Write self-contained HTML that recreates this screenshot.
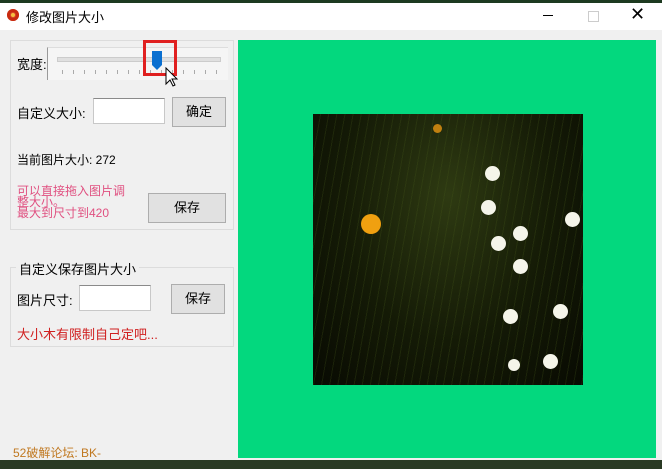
<!DOCTYPE html><html><head><meta charset="utf-8"><style>
body{margin:0;width:662px;height:469px;overflow:hidden;background:#1d3a20;font-family:"Liberation Sans","Noto Sans CJK SC",sans-serif;font-size:12px;position:relative}
.a{position:absolute}
.win{left:0;top:3px;width:662px;height:457px;background:#f0f0f0}
.title{left:0;top:3px;width:662px;height:27px;background:#fff}
.btn{background:#e1e1e1;border:1px solid #adadad;box-sizing:border-box;text-align:center;font-size:13px}
.inp{background:#fff;border:1px solid #c8c8c8;border-top-color:#8a8a8a;box-sizing:border-box}
.grp{border:1px solid #dcdcdc;box-sizing:border-box}
.f{position:absolute;border-radius:50%;background:#f5f5ea;width:15px;height:15px}
</style></head><body>
<div class="a win"></div>
<div class="a title"></div>
<div class="a" style="left:7px;top:9px;width:12px;height:12px;border-radius:50%;background:#d94a2a;box-shadow:inset 0 0 0 3px #c82a10"></div>
<div class="a" style="left:11px;top:13px;width:4px;height:4px;border-radius:50%;background:#f5c040"></div>
<div class="a" style="left:26px;top:7px;font-size:13px;color:#000">修改图片大小</div>
<div class="a" style="left:543px;top:15px;width:10px;height:1px;background:#000"></div>
<div class="a" style="left:588px;top:11px;width:9px;height:9px;border:1px solid #ccc"></div>
<div class="a" style="left:630px;top:4px;font-size:18px;color:#000">✕</div>
<div class="a" style="left:0;top:460px;width:662px;height:9px;background:#2a3a24"></div>
<div class="a grp" style="left:10px;top:40px;width:224px;height:190px"></div>
<div class="a" style="left:17px;top:54px;font-size:13px">宽度:</div>
<div class="a" style="left:47px;top:47px;width:180px;height:32px;background:#f5f5f5;border-left:1px solid #999;border-top:1px solid #ddd"></div>
<div class="a" style="left:57px;top:57px;width:162px;height:3px;background:#e0e0e0;border:1px solid #ccc"></div>
<div class="a" style="left:62px;top:70px;width:160px;height:4px;background:repeating-linear-gradient(90deg,#aaa 0 1px,transparent 1px 11px)"></div>
<div class="a" style="left:143px;top:40px;width:28px;height:30px;border:3px solid #e02020"></div>
<svg class="a" style="left:150px;top:50px" width="16" height="22"><path d="M2 1h10v14l-5 5-5-5z" fill="#0a6fd0"/></svg>
<svg class="a" style="left:165px;top:67px" width="14" height="22"><path d="M1 1v16l4-4 3 6 2-1-3-6h5z" fill="#fff" stroke="#000"/></svg>
<div class="a" style="left:17px;top:103px;font-size:13px">自定义大小:</div>
<div class="a inp" style="left:93px;top:98px;width:72px;height:26px"></div>
<div class="a btn" style="left:172px;top:97px;width:54px;height:30px;line-height:28px">确定</div>
<div class="a" style="left:17px;top:151px">当前图片大小: 272</div>
<div class="a" style="left:17px;top:186px;color:#e05080;line-height:11px;font-size:12px">可以直接拖入图片调<br>整大小。<br>最大到尺寸到420</div>
<div class="a btn" style="left:148px;top:193px;width:78px;height:30px;line-height:28px">保存</div>
<div class="a grp" style="left:10px;top:267px;width:224px;height:80px"></div>
<div class="a" style="left:16px;top:259px;background:#f0f0f0;padding:0 3px;font-size:13px">自定义保存图片大小</div>
<div class="a" style="left:17px;top:290px;font-size:13px">图片尺寸:</div>
<div class="a inp" style="left:79px;top:285px;width:72px;height:26px"></div>
<div class="a btn" style="left:171px;top:284px;width:54px;height:30px;line-height:28px">保存</div>
<div class="a" style="left:17px;top:324px;color:#d02020;font-size:13px">大小木有限制自己定吧...</div>
<div class="a" style="left:13px;top:444px;color:#c07820;font-size:12px">52破解论坛:  BK-</div>
<div class="a" style="left:238px;top:40px;width:418px;height:418px;background:#03d87e"></div>
<div class="a" style="left:313px;top:114px;width:270px;height:271px;background:radial-gradient(ellipse at 50% 30%,#2e3a12,#141a06 55%,#080a02);overflow:hidden">
<div class="a" style="left:0;top:0;width:270px;height:271px;background:repeating-linear-gradient(100deg,transparent 0 7px,rgba(70,90,25,.25) 7px 8px)"></div>
<div class="a" style="left:48px;top:100px;width:20px;height:20px;border-radius:50%;background:#f0a010"></div>
<div class="a" style="left:120px;top:10px;width:9px;height:9px;border-radius:50%;background:#c08010"></div>
<div class="f" style="left:172px;top:52px"></div>
<div class="f" style="left:168px;top:86px"></div>
<div class="f" style="left:178px;top:122px"></div>
<div class="f" style="left:200px;top:112px"></div>
<div class="f" style="left:200px;top:145px"></div>
<div class="f" style="left:190px;top:195px"></div>
<div class="f" style="left:230px;top:240px"></div>
<div class="f" style="left:252px;top:98px"></div>
<div class="f" style="left:240px;top:190px"></div>
<div class="f" style="left:195px;top:245px;width:12px;height:12px"></div>
</div>
</body></html>
